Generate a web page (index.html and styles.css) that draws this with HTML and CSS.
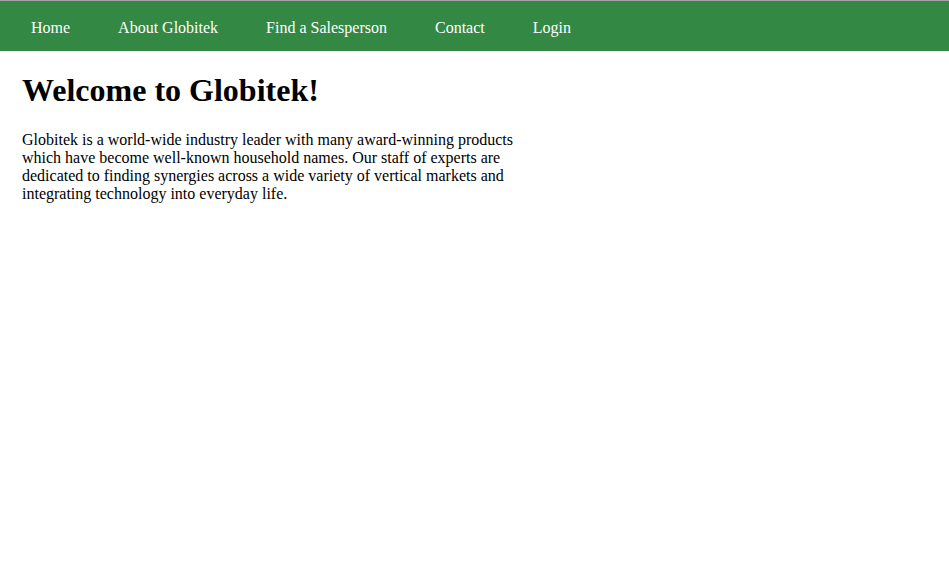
FILE: index.html
```html
<!DOCTYPE html>
<html>
<head>
<meta charset="utf-8">
<title>Globitek</title>
<link rel="stylesheet" href="styles.css">
</head>
<body>
<nav class="topnav">
  <a class="nav-link" href="#">Home</a>
  <a class="nav-link" href="#">About Globitek</a>
  <a class="nav-link" href="#">Find a Salesperson</a>
  <a class="nav-link" href="#">Contact</a>
  <a class="nav-link" href="#">Login</a>
</nav>
<main class="content">
  <h1 class="title">Welcome to Globitek!</h1>
  <p class="intro">Globitek is a world-wide industry leader with many award-winning products which have become well-known household names. Our staff of experts are dedicated to finding synergies across a wide variety of vertical markets and integrating technology into everyday life.</p>
</main>
</body>
</html>
```
FILE: styles.css
```css
html, body {
  margin: 0;
  padding: 0;
  background: #ffffff;
}
body {
  font-family: "Liberation Serif", "Times New Roman", serif;
  font-size: 16px;
  color: #000;
  border-top: 1px solid #a3a3a3;
}
.topnav {
  display: flex;
  background: #338844;
  height: 50px;
  box-sizing: border-box;
  padding: 18px 0 0 7px;
}
.nav-link {
  color: #ffffff;
  text-decoration: none;
  padding: 0 24px;
}
.content {
  padding: 0 22px;
  max-width: 500px;
}
.title {
  font-size: 32px;
  font-weight: bold;
  margin: 21px 0 22px;
}
.intro {
  margin: 0;
}
```
